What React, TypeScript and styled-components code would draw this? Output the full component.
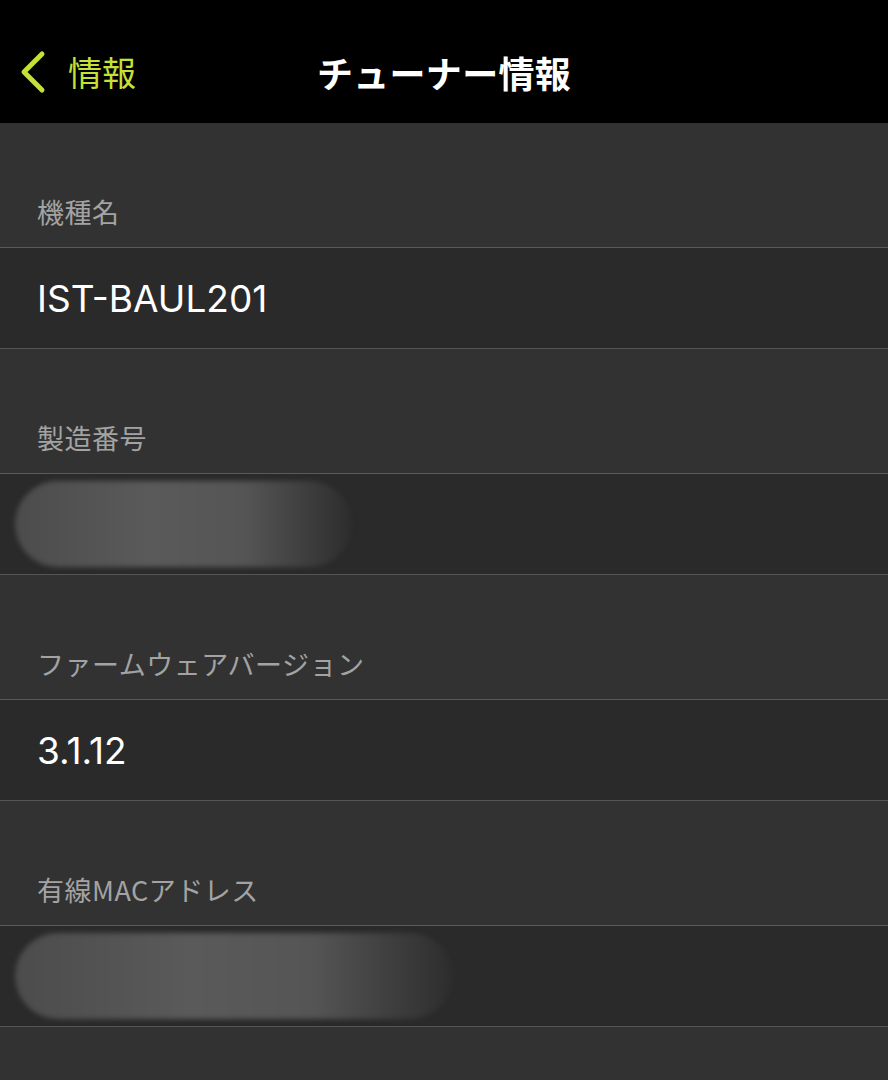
import styled, { createGlobalStyle } from "styled-components";

const GlobalStyle = createGlobalStyle`
  html, body {
    margin: 0;
    padding: 0;
    background: #323232;
  }
  body {
    font-family: "Noto Sans CJK JP", "Noto Sans", sans-serif;
    -webkit-font-smoothing: antialiased;
  }
`;

const Page = styled.div`
  width: 888px;
  min-height: 1080px;
  background: #323232;
`;

const NavBar = styled.header`
  height: 123px;
  background: #000;
  display: grid;
  grid-template-columns: 1fr auto 1fr;
  align-items: center;
  padding-top: 20px;
  box-sizing: border-box;
`;

const BackButton = styled.div`
  display: flex;
  align-items: center;
  gap: 20px;
  padding-left: 18px;
  color: #c6e135;
  font-size: 34px;
`;

const Title = styled.h1`
  margin: 0;
  color: #fff;
  font-size: 36px;
  font-weight: 700;
  letter-spacing: 0.3px;
`;

const SectionHeader = styled.div`
  height: 125px;
  display: flex;
  align-items: flex-end;
  padding: 0 0 16px 37px;
  box-sizing: border-box;
  color: #a3a3a3;
  font-size: 27px;
  letter-spacing: 0.5px;
  border-bottom: 1px solid #5a5a5a;
`;

const Row = styled.div`
  height: 101px;
  display: flex;
  align-items: center;
  padding-left: 37px;
  box-sizing: border-box;
  background: #2a2a2a;
  color: #fff;
  font-size: 37px;
  font-family: "Inter", "Noto Sans", "Noto Sans CJK JP", sans-serif;
  border-bottom: 1px solid #555;
`;

const Masked = styled.div<{ $w: number }>`
  width: ${(p) => p.$w}px;
  height: 86px;
  margin-left: -22px;
  border-radius: 43px;
  background: linear-gradient(
    90deg,
    #4c4c4c 0%,
    #5a5a5a 40%,
    #555555 68%,
    #2d2d2d 100%
  );
  filter: blur(2.5px);
`;

function Chevron() {
  return (
    <svg width="30" height="44" viewBox="0 0 30 44">
      <path
        d="M24 4 L6 22 L24 40"
        fill="none"
        stroke="#c6e135"
        strokeWidth="5"
        strokeLinecap="round"
        strokeLinejoin="round"
      />
    </svg>
  );
}

const items = [
  { label: "機種名", value: "IST-BAUL201" },
  { label: "製造番号", masked: 337 },
  { label: "ファームウェアバージョン", value: "3.1.12" },
  { label: "有線MACアドレス", masked: 438 },
];

export default function App() {
  return (
    <Page>
      <GlobalStyle />
      <NavBar>
        <BackButton>
          <Chevron />
          <span>情報</span>
        </BackButton>
        <Title>チューナー情報</Title>
        <div />
      </NavBar>
      {items.map((it) => (
        <div key={it.label}>
          <SectionHeader>{it.label}</SectionHeader>
          <Row>{it.masked ? <Masked $w={it.masked} /> : it.value}</Row>
        </div>
      ))}
    </Page>
  );
}
